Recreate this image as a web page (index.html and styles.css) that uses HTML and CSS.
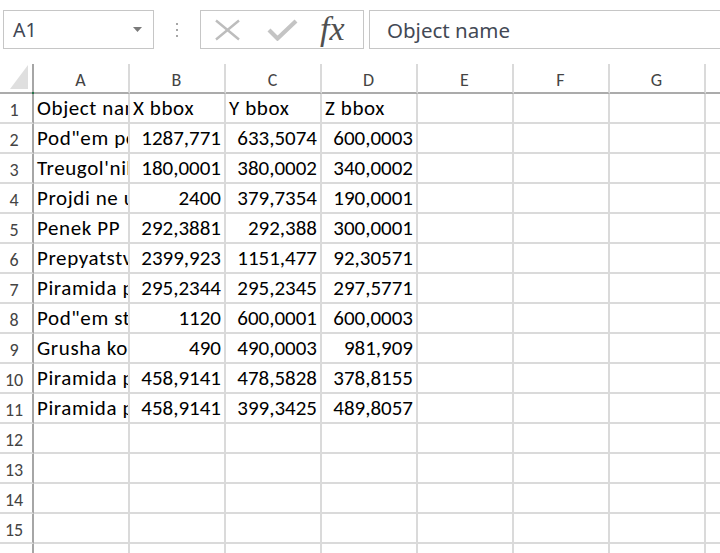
FILE: index.html
```html
<!DOCTYPE html>
<html>
<head>
<meta charset="utf-8">
<link rel="stylesheet" href="styles.css">
</head>
<body>
<div class="fbar">
  <div class="namebox">
    <span class="nb-text">A1</span>
    <svg class="nb-arrow" width="9" height="5" viewBox="0 0 9 5"><polygon points="0,0 9,0 4.5,5" fill="#7a7a7a"/></svg>
  </div>
  <div class="dots">
    <svg width="2" height="14" viewBox="0 0 2 14"><rect x="0" y="0" width="2" height="2" fill="#a6a6a6"/><rect x="0" y="6" width="2" height="2" fill="#a6a6a6"/><rect x="0" y="12" width="2" height="2" fill="#a6a6a6"/></svg>
  </div>
  <div class="fxbox">
    <svg class="ic-x" width="27" height="22" viewBox="0 0 27 22"><path d="M2 1.5 L25 20.5 M25 1.5 L2 20.5" stroke="#bdbdbd" stroke-width="2.4" fill="none"/></svg>
    <svg class="ic-check" width="31" height="22" viewBox="0 0 31 22"><path d="M2 11 L10.5 19.5 L29 2" stroke="#c4c4c4" stroke-width="4.2" fill="none"/></svg>
    <span class="fx">fx</span>
  </div>
  <div class="finput">Object name</div>
</div>

<div class="sheet">
  <div class="c corner"><svg class="tri" width="18" height="24" viewBox="0 0 18 24"><polygon points="18,0 18,24 0,24" fill="#dfdfdf"/></svg><span class="sel-dot"></span></div>
  <div class="c ch">A</div><div class="c ch">B</div><div class="c ch">C</div><div class="c ch">D</div><div class="c ch">E</div><div class="c ch">F</div><div class="c ch">G</div><div class="c ch">H</div>

  <div class="c rh">1</div><div class="c t">Object name</div><div class="c t">X bbox</div><div class="c t">Y bbox</div><div class="c t">Z bbox</div><div class="c"></div><div class="c"></div><div class="c"></div><div class="c"></div>
  <div class="c rh">2</div><div class="c t">Pod"em pola</div><div class="c num">1287,771</div><div class="c num">633,5074</div><div class="c num">600,0003</div><div class="c"></div><div class="c"></div><div class="c"></div><div class="c"></div>
  <div class="c rh">3</div><div class="c t">Treugol'nik</div><div class="c num">180,0001</div><div class="c num">380,0002</div><div class="c num">340,0002</div><div class="c"></div><div class="c"></div><div class="c"></div><div class="c"></div>
  <div class="c rh">4</div><div class="c t">Projdi ne ustupaya</div><div class="c num">2400</div><div class="c num">379,7354</div><div class="c num">190,0001</div><div class="c"></div><div class="c"></div><div class="c"></div><div class="c"></div>
  <div class="c rh">5</div><div class="c t">Penek PP</div><div class="c num">292,3881</div><div class="c num">292,388</div><div class="c num">300,0001</div><div class="c"></div><div class="c"></div><div class="c"></div><div class="c"></div>
  <div class="c rh">6</div><div class="c t">Prepyatstvie</div><div class="c num">2399,923</div><div class="c num">1151,477</div><div class="c num">92,30571</div><div class="c"></div><div class="c"></div><div class="c"></div><div class="c"></div>
  <div class="c rh">7</div><div class="c t">Piramida pesok</div><div class="c num">295,2344</div><div class="c num">295,2345</div><div class="c num">297,5771</div><div class="c"></div><div class="c"></div><div class="c"></div><div class="c"></div>
  <div class="c rh">8</div><div class="c t">Pod"em stupeni</div><div class="c num">1120</div><div class="c num">600,0001</div><div class="c num">600,0003</div><div class="c"></div><div class="c"></div><div class="c"></div><div class="c"></div>
  <div class="c rh">9</div><div class="c t">Grusha kolonna</div><div class="c num">490</div><div class="c num">490,0003</div><div class="c num">981,909</div><div class="c"></div><div class="c"></div><div class="c"></div><div class="c"></div>
  <div class="c rh">10</div><div class="c t">Piramida pesok</div><div class="c num">458,9141</div><div class="c num">478,5828</div><div class="c num">378,8155</div><div class="c"></div><div class="c"></div><div class="c"></div><div class="c"></div>
  <div class="c rh">11</div><div class="c t">Piramida pesok</div><div class="c num">458,9141</div><div class="c num">399,3425</div><div class="c num">489,8057</div><div class="c"></div><div class="c"></div><div class="c"></div><div class="c"></div>
  <div class="c rh">12</div><div class="c"></div><div class="c"></div><div class="c"></div><div class="c"></div><div class="c"></div><div class="c"></div><div class="c"></div><div class="c"></div>
  <div class="c rh">13</div><div class="c"></div><div class="c"></div><div class="c"></div><div class="c"></div><div class="c"></div><div class="c"></div><div class="c"></div><div class="c"></div>
  <div class="c rh">14</div><div class="c"></div><div class="c"></div><div class="c"></div><div class="c"></div><div class="c"></div><div class="c"></div><div class="c"></div><div class="c"></div>
  <div class="c rh">15</div><div class="c"></div><div class="c"></div><div class="c"></div><div class="c"></div><div class="c"></div><div class="c"></div><div class="c"></div><div class="c"></div>
  <div class="c rh">16</div><div class="c"></div><div class="c"></div><div class="c"></div><div class="c"></div><div class="c"></div><div class="c"></div><div class="c"></div><div class="c"></div>
</div>
</body>
</html>
```

FILE: styles.css
```css
html, body {
  margin: 0;
  padding: 0;
  background: #ffffff;
}
body {
  width: 720px;
  height: 553px;
  overflow: hidden;
  font-family: Carlito, Calibri, Lato, sans-serif;
}

/* formula bar */
.fbar {
  display: flex;
  align-items: center;
  height: 39px;
  margin-top: 10px;
  width: 900px;
}
.namebox {
  box-sizing: border-box;
  margin-left: 3px;
  width: 151px;
  height: 39px;
  border: 1px solid #c6c6c6;
  display: flex;
  align-items: center;
  justify-content: space-between;
  padding: 0 11px 0 9px;
}
.nb-text {
  font-family: "Noto Sans", sans-serif;
  font-size: 19.5px;
  color: #3f4654;
  line-height: 1;
}
.nb-arrow {
  display: block;
}
.dots {
  width: 46px;
  display: flex;
  justify-content: center;
}
.dots svg {
  display: block;
}
.fxbox {
  box-sizing: border-box;
  width: 164px;
  height: 39px;
  border: 1px solid #c6c6c6;
  display: flex;
  align-items: center;
  padding-left: 13px;
}
.ic-x {
  display: block;
}
.ic-check {
  display: block;
  margin-left: 26px;
}
.fx {
  margin-left: 22px;
  font-family: "Liberation Serif", serif;
  font-style: italic;
  font-size: 34px;
  color: #505050;
  line-height: 1;
  margin-top: -2px;
}
.finput {
  box-sizing: border-box;
  margin-left: 5px;
  width: 420px;
  height: 39px;
  border: 1px solid #c6c6c6;
  display: flex;
  align-items: center;
  padding-left: 17px;
  font-family: "Noto Sans", sans-serif;
  font-size: 20.5px;
  color: #434955;
}

/* sheet */
.sheet {
  margin-top: 15px;
  display: grid;
  grid-template-columns: 34px repeat(8, 96px);
  grid-auto-rows: 30px;
  width: 802px;
}
.c {
  box-sizing: border-box;
  border-right: 2px solid #dadada;
  border-bottom: 2px solid #dadada;
  overflow: hidden;
  white-space: nowrap;
  display: flex;
  align-items: flex-end;
  padding: 0 4px 3px 3px;
  font-size: 21px;
  line-height: 21px;
  color: #000000;
}
.t {
  letter-spacing: 0.6px;
}
.num {
  justify-content: flex-end;
  padding-right: 3px;
}
.ch {
  justify-content: center;
  font-size: 18px;
  line-height: 18px;
  color: #444444;
  border-bottom-color: #ababab;
}
.rh {
  justify-content: center;
  padding-left: 0;
  padding-right: 4px;
  font-size: 18px;
  line-height: 18px;
  color: #444444;
  border-right-color: #a6a6a6;
}
.corner {
  position: relative;
  overflow: visible;
  border-right-color: #a6a6a6;
  border-bottom-color: #ababab;
  padding: 0;
}
.tri {
  position: absolute;
  left: 10px;
  top: 1px;
}
.sel-dot {
  position: absolute;
  right: -2px;
  bottom: -2px;
  width: 2px;
  height: 2px;
  background: #217346;
}
```
